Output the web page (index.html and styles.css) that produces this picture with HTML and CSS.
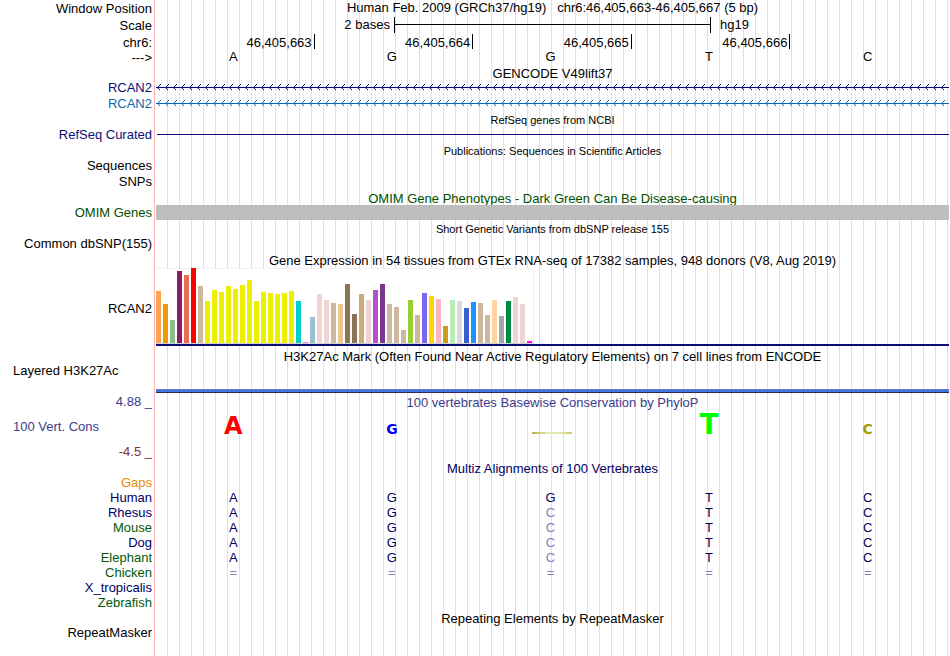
FILE: index.html
```
<!DOCTYPE html>
<html lang="en">
<head>
    <meta charset="UTF-8">
    <meta name="viewport" content="width=device-width, initial-scale=1.0">
    <title>Human chr6:46,405,663-46,405,667 (hg19)</title>
    <link rel="stylesheet" href="styles.css">
</head>
<body>
    <main class="browser">
        <!-- ruler -->
        <div class="row ruler">
            <div class="label">Window Position</div>
            <div class="title">Human Feb. 2009 (GRCh37/hg19) &nbsp; chr6:46,405,663-46,405,667 (5 bp)</div>
        </div>
        <div class="row ruler">
            <div class="label">Scale</div>
            <div class="scale">
                <span class="scale-size">2 bases</span>
                <span class="scale-bar"></span>
                <span class="scale-db">hg19</span>
            </div>
        </div>
        <div class="row ruler positions">
            <div class="label">chr6:</div>
            <div class="bases ticks">
                <span>46,405,663</span><span>46,405,664</span><span>46,405,665</span><span>46,405,666</span>
            </div>
        </div>
        <div class="row ruler">
            <div class="label">---&gt;</div>
            <div class="bases"><span>A</span><span>G</span><span>G</span><span>T</span><span>C</span></div>
        </div>

        <!-- genes -->
        <div class="row heading short">
            <h2 class="title">GENCODE V49lift37</h2>
        </div>
        <div class="row navy">
            <div class="label">RCAN2</div>
            <svg class="intron" width="100%" height="16">
                <defs>
                    <pattern id="arrow1" width="8" height="16" patternUnits="userSpaceOnUse">
                        <path d="M4.5 4.5L1.5 7.5L4.5 10.5" fill="none" stroke="currentColor"/>
                        <path d="M0 7.5H8" stroke="currentColor"/>
                    </pattern>
                </defs>
                <rect width="100%" height="16" fill="url(#arrow1)"/>
            </svg>
        </div>
        <div class="row blue">
            <div class="label">RCAN2</div>
            <svg class="intron" width="100%" height="16">
                <defs>
                    <pattern id="arrow2" width="8" height="16" patternUnits="userSpaceOnUse">
                        <path d="M4.5 4.5L1.5 7.5L4.5 10.5" fill="none" stroke="currentColor"/>
                        <path d="M0 7.5H8" stroke="currentColor"/>
                    </pattern>
                </defs>
                <rect width="100%" height="16" fill="url(#arrow2)"/>
            </svg>
        </div>
        <div class="row heading">
            <h2 class="title small">RefSeq genes from NCBI</h2>
        </div>
        <div class="row navy">
            <div class="label">RefSeq Curated</div>
            <div class="gene-line"></div>
        </div>

        <!-- literature -->
        <div class="row heading">
            <h2 class="title small">Publications: Sequences in Scientific Articles</h2>
        </div>
        <div class="row"><div class="label">Sequences</div></div>
        <div class="row"><div class="label">SNPs</div></div>
        <div class="row heading low green">
            <h2 class="title">OMIM Gene Phenotypes - Dark Green Can Be Disease-causing</h2>
        </div>
        <div class="row green">
            <div class="label">OMIM Genes</div>
            <div class="omim"></div>
        </div>
        <div class="row heading">
            <h2 class="title small">Short Genetic Variants from dbSNP release 155</h2>
        </div>
        <div class="row tall"><div class="label">Common dbSNP(155)</div></div>

        <!-- expression -->
        <div class="row heading">
            <h2 class="title">Gene Expression in 54 tissues from GTEx RNA-seq of 17382 samples, 948 donors (V8, Aug 2019)</h2>
        </div>
        <div class="row gtex">
            <div class="label">RCAN2</div>
            <div class="gtex-body"><div class="gtex-chart" id="gtex"></div></div>
        </div>

        <!-- regulation -->
        <div class="row heading short h3k-title">
            <h2 class="title">H3K27Ac Mark (Often Found Near Active Regulatory Elements) on 7 cell lines from ENCODE</h2>
        </div>
        <div class="row h3k">
            <div class="label left">Layered H3K27Ac</div>
            <div class="h3k-signal"></div>
        </div>

        <!-- conservation -->
        <div class="row cons">
            <div class="cons-labels">
                <div class="label">4.88 _</div>
                <div class="label left">100 Vert. Cons</div>
                <div class="label min">-4.5 _</div>
            </div>
            <div>
                <h2 class="title">100 vertebrates Basewise Conservation by PhyloP</h2>
                <div class="bases logo">
                    <b class="logo-a">A</b>
                    <b class="logo-g">G</b>
                    <i class="logo-flat"></i>
                    <b class="logo-t">T</b>
                    <b class="logo-c">C</b>
                </div>
            </div>
        </div>
        <div class="row heading short multiz">
            <h2 class="title">Multiz Alignments of 100 Vertebrates</h2>
        </div>
        <div class="row species gaps"><div class="label">Gaps</div></div>
        <div class="row species multiz">
            <div class="label">Human</div>
            <div class="bases"><span>A</span><span>G</span><span>G</span><span>T</span><span>C</span></div>
        </div>
        <div class="row species multiz">
            <div class="label">Rhesus</div>
            <div class="bases"><span>A</span><span>G</span><span class="diff">C</span><span>T</span><span>C</span></div>
        </div>
        <div class="row species multiz">
            <div class="label alt">Mouse</div>
            <div class="bases"><span>A</span><span>G</span><span class="diff">C</span><span>T</span><span>C</span></div>
        </div>
        <div class="row species multiz">
            <div class="label">Dog</div>
            <div class="bases"><span>A</span><span>G</span><span class="diff">C</span><span>T</span><span>C</span></div>
        </div>
        <div class="row species multiz">
            <div class="label alt">Elephant</div>
            <div class="bases"><span>A</span><span>G</span><span class="diff">C</span><span>T</span><span>C</span></div>
        </div>
        <div class="row species multiz">
            <div class="label alt">Chicken</div>
            <div class="bases diff"><span>=</span><span>=</span><span>=</span><span>=</span><span>=</span></div>
        </div>
        <div class="row species multiz"><div class="label">X_tropicalis</div></div>
        <div class="row species multiz"><div class="label alt">Zebrafish</div></div>

        <!-- repeats -->
        <div class="row heading low">
            <h2 class="title">Repeating Elements by RepeatMasker</h2>
        </div>
        <div class="row"><div class="label">RepeatMasker</div></div>
    </main>

    <script>
        // [color, height in px] for each of the 54 tissues
        const tissues = [
            ['#ffa54f', 52], ['#ee9a00', 39], ['#8fbc8f', 23], ['#8b1c62', 72], ['#ee6a50', 68], ['#ff0000', 75],
            ['#cdb79e', 57], ['#eeee00', 42], ['#eeee00', 53], ['#eeee00', 51], ['#eeee00', 57], ['#eeee00', 54],
            ['#eeee00', 58], ['#eeee00', 63], ['#eeee00', 42], ['#eeee00', 51], ['#eeee00', 50], ['#eeee00', 49],
            ['#eeee00', 50], ['#eeee00', 52], ['#00cdcd', 42], ['#ee82ee', 1], ['#9ac0cd', 26], ['#eed5d2', 49],
            ['#eed5d2', 43], ['#cdb79e', 40], ['#eec591', 39], ['#8b7355', 59], ['#8b7355', 29], ['#cdaa7d', 49],
            ['#eed5d2', 43], ['#b452cd', 53], ['#7a378b', 59], ['#cdb79e', 39], ['#cdb79e', 36], ['#cdb79e', 13],
            ['#9acd32', 43], ['#cdb79e', 28], ['#7a67ee', 50], ['#ffd700', 47], ['#ffb6c1', 44], ['#cd9b1d', 17],
            ['#b4eeb4', 43], ['#d9d9d9', 42], ['#3a5fcd', 35], ['#1e90ff', 41], ['#cdb79e', 40], ['#cdb79e', 28],
            ['#ffd39b', 43], ['#a6a6a6', 27], ['#008b45', 42], ['#eed5d2', 46], ['#eed5d2', 39], ['#ff00ff', 2]
        ];
        const chart = document.getElementById('gtex');

        tissues.forEach(function([color, height]) {
            const bar = document.createElement('span');
            bar.style.background = color;
            bar.style.height = height + 'px';
            chart.appendChild(bar);
        });
    </script>
</body>
</html>
```
FILE: styles.css
```
body {
    margin: 0;
    background: #fff;
    color: #000;
    font-family: "Liberation Sans", Arial, sans-serif;
    font-size: 13px;
    line-height: 15px;
}
.browser {
    min-height: 100vh;
    box-sizing: border-box;
    padding-right: 1px;
    background-image:
        linear-gradient(to right, #fff 154px, #ffb4b4 154px, #ffb4b4 155px, transparent 155px),
        repeating-linear-gradient(to right, transparent 0, transparent 11px, #dcdcfa 11px, #dcdcfa 12px);
    background-position: 0 0, 156px 0;
    background-repeat: no-repeat;
}

/* rows: label on the left, data on the right */
.row {
    display: grid;
    grid-template-columns: 156px minmax(0, 1fr);
    height: 16px;
}
.label {
    padding-right: 4px;
    text-align: right;
    white-space: nowrap;
}
.label.left {
    padding-left: 13px;
    text-align: left;
}
.title {
    grid-column: 2;
    margin: 0;
    font-size: 13px;
    font-weight: normal;
    text-align: center;
    white-space: nowrap;
}
.title.small {
    font-size: 11px;
    line-height: 17px;
}
.row.heading,
.row.species {
    height: 15px;
}
.row.heading.short {
    height: 14px;
}
.row.low .title {
    line-height: 17px;
}
.row.tall,
.row.ruler {
    height: 17px;
}
.row.positions {
    height: 15px;
}
.ruler .label,
.ticks {
    line-height: 17px;
}

.navy { color: #0c0c78; }
.blue { color: #0c69af; }
.green { color: #005000; }
.multiz { color: #000064; }
.gaps { color: #e68a0a; }
.label.alt { color: #005a0a; }
.diff { color: #8080b4; }

/* ruler */
.scale {
    display: grid;
    grid-template-columns: 30% 40% 30%;
}
.scale-size {
    padding-right: 4px;
    text-align: right;
}
.scale-bar {
    height: 16px;
    border: solid #000;
    border-width: 0 1px;
    background: linear-gradient(#000, #000) 0 7px / 100% 1px no-repeat;
}
.scale-db {
    padding-left: 9px;
}
.bases {
    display: grid;
    grid-template-columns: repeat(5, 1fr);
    text-align: center;
}
.bases > * {
    padding-right: 4px;
}
.ticks > span {
    height: 15px;
    padding-right: 2px;
    border-right: 1px solid #000;
    text-align: right;
}

/* genes */
.intron {
    display: block;
    shape-rendering: crispEdges;
}
.gene-line {
    height: 1px;
    margin: 7px 0 0 1px;
    background: #0c0c78;
}
.omim {
    height: 15px;
    background: #bebebe;
}

/* expression */
.row.gtex {
    height: 78px;
}
.gtex .label {
    align-self: center;
    padding-top: 2px;
}
.gtex-body {
    border-bottom: 2px solid #0c0c78;
}
.gtex-chart {
    display: flex;
    align-items: flex-end;
    gap: 2px;
    width: max-content;
    height: 75px;
    padding-right: 2px;
    border-bottom: 1px solid #d2d2d2;
    background: #fff;
    box-shadow: inset 0 1px #f0f0f0, inset -1px 0 #f0f0f0;
}
.gtex-chart span {
    width: 5px;
}

/* regulation */
.h3k-title {
    padding-top: 3px;
}
.row.h3k {
    height: 31px;
}
.h3k-signal {
    height: 2px;
    margin-top: 26px;
    border-top: 1px solid #6e6edc;
    border-bottom: 1px solid #32285a;
    background: #3c78d7;
}

/* conservation */
.row.cons {
    height: 67px;
    color: #3c3c8c;
}
.cons-labels {
    display: grid;
    grid-template-rows: 25px 25px 17px;
}
.label.min {
    color: #823232;
}
.cons .title {
    padding-top: 1px;
}
.logo {
    align-items: baseline;
    padding-top: 1px;
    font-family: "DejaVu Sans", sans-serif;
    line-height: 28px;
}
.logo-a {
    color: #f00;
    font-size: 24px;
}
.logo-g,
.logo-c {
    font-size: 14px;
}
.logo-g { color: #00f; }
.logo-c { color: #a0a000; }
.logo-t {
    color: #0f0;
    font-size: 28px;
}
.bases .logo-flat {
    width: 40px;
    height: 2px;
    padding: 0;
    justify-self: center;
    background: linear-gradient(to right, #b4b43c, #e6e6b4 40%, #e6e6b4 70%, #c8c864);
}
```
